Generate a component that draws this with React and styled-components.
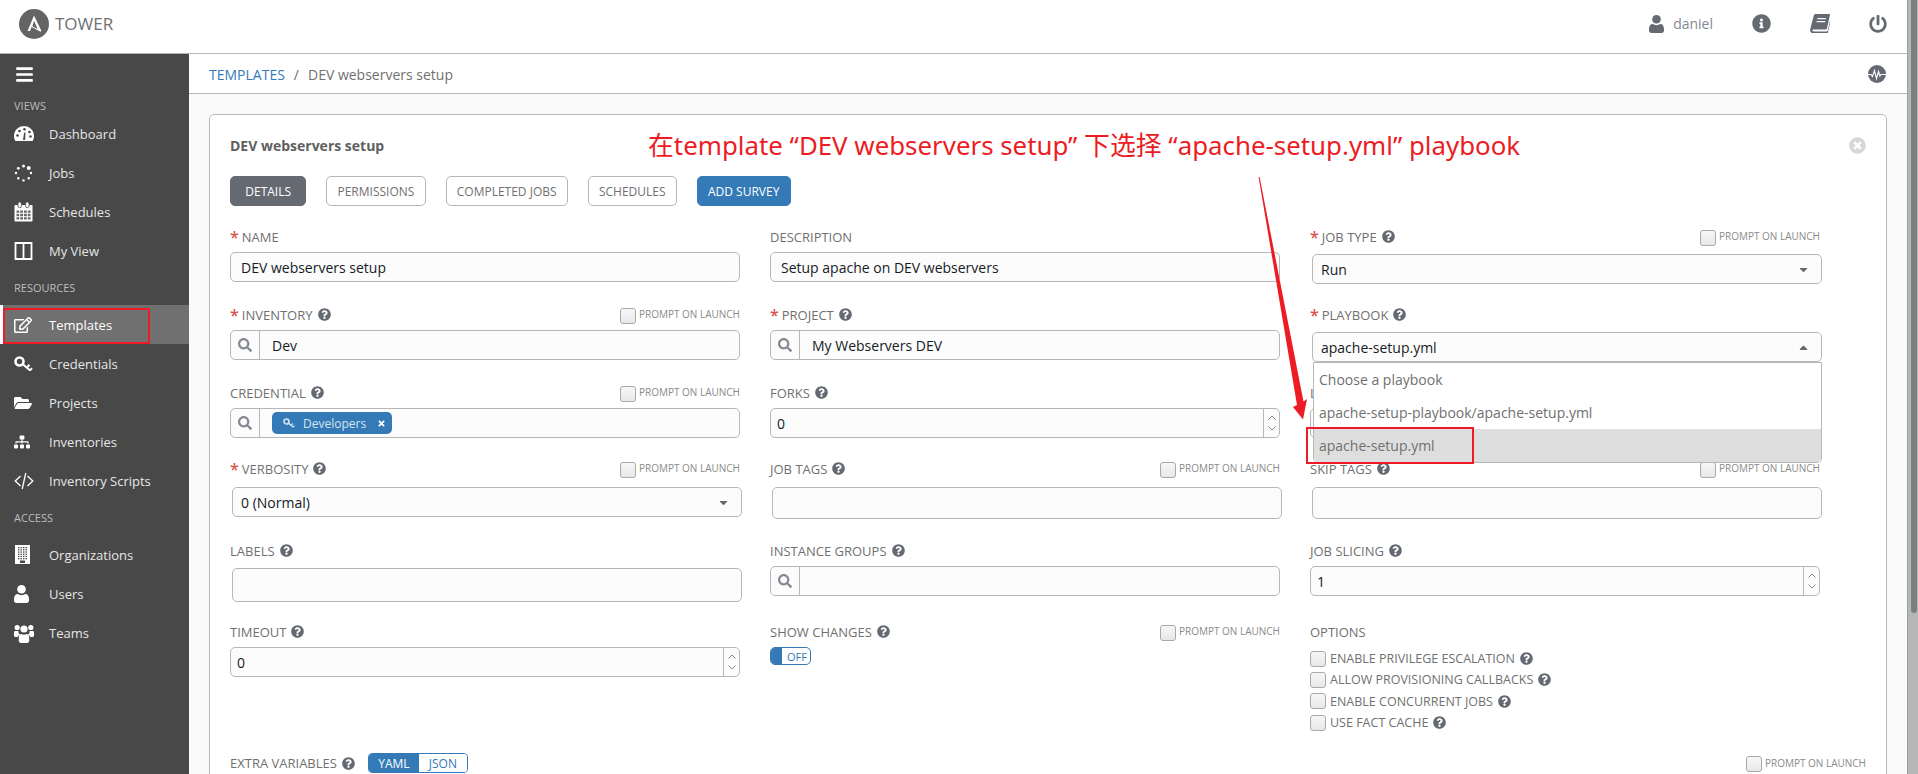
import React from "react";
import styled, { createGlobalStyle } from "styled-components";
import {
  FaBars,
  FaCaretDown,
  FaCaretUp,
  FaFolderOpen,
  FaInfoCircle,
  FaPowerOff,
  FaQuestionCircle,
  FaRegEdit,
  FaSearch,
  FaSitemap,
  FaTimes,
  FaTimesCircle,
} from "react-icons/fa";

const GlobalStyle = createGlobalStyle`
  html, body {
    margin: 0;
    height: 100%;
    overflow: hidden;
    background: #fff;
    font-family: "Open Sans", "Noto Sans", sans-serif;
  }
  * { box-sizing: border-box; }
`;

const Page = styled.div`
  position: relative;
  width: 1918px;
  height: 774px;
  overflow: hidden;
  display: flex;
  flex-direction: column;
`;

const Header = styled.header`
  height: 54px;
  flex: none;
  display: flex;
  align-items: center;
  padding: 0 20px 6px 19px;
  border-bottom: 1px solid #b7b7b7;
  margin-right: 11px;
  background: #fff;
`;

const Brand = styled.div`
  display: flex;
  align-items: center;
  gap: 6px;
  color: #707070;
  font-size: 17px;
  flex: 1;
`;

const UserName = styled.span`
  font-size: 14px;
  color: #848992;
  margin: 0 39px 0 9px;
`;

const HeadIcon = styled.span`
  display: flex;
  color: #646972;
  font-size: ${(p) => p.size || 18}px;
  margin-left: ${(p) => p.gap || 0}px;
`;

const Body = styled.div`
  flex: 1;
  display: flex;
  min-height: 0;
`;

const Sidebar = styled.nav`
  width: 189px;
  flex: none;
  background: #484848;
  color: #e6e6e6;
`;

const Burger = styled.div`
  height: 40px;
  padding-left: 15px;
  display: flex;
  align-items: center;
  color: #fff;
  font-size: 19px;
`;

const NavLabel = styled.div`
  height: ${(p) => (p.first ? 20 : 35)}px;
  padding: ${(p) => (p.first ? "2px" : "0")} 0 0 14px;
  display: flex;
  align-items: center;
  font-size: 11px;
  color: #bcbcbc;
`;

const NavItem = styled.div`
  height: 39px;
  display: flex;
  align-items: center;
  font-size: 13px;
  padding-left: ${(p) => (p.active ? 11 : 14)}px;
  border-left: ${(p) => (p.active ? "3px solid #fff" : "0")};
  background: ${(p) => (p.active ? "#707070" : "transparent")};
  color: ${(p) => (p.active ? "#fff" : "#e6e6e6")};
`;

const NavIcon = styled.span`
  width: 35px;
  display: flex;
  color: #fff;
  font-size: ${(p) => p.size || 18}px;
`;

const Main = styled.main`
  flex: 1;
  min-width: 0;
  display: flex;
  flex-direction: column;
`;

const Crumbs = styled.div`
  height: 40px;
  flex: none;
  display: flex;
  align-items: center;
  padding: 1px 21px 0 20px;
  margin-right: 11px;
  font-size: 14px;
  color: #707070;
  border-bottom: 1px solid #b7b7b7;
`;

const CrumbLink = styled.span`
  color: #337ab7;
`;

const Slash = styled.span`
  margin: 0 9px;
`;

const Pulse = styled.span`
  margin-left: auto;
  display: flex;
`;

const Content = styled.div`
  flex: 1;
  background: #fafafa;
  padding: 20px 31px 0 20px;
`;

const Card = styled.section`
  width: 1678px;
  height: 700px;
  background: #fff;
  border: 1px solid #b7b7b7;
  border-radius: 5px;
  padding: 20px;
`;

const TitleRow = styled.div`
  height: 22px;
  padding-bottom: 2px;
  display: flex;
  align-items: center;
  justify-content: space-between;
  font-size: 14px;
  font-weight: 700;
  color: #606060;
  margin-bottom: 19px;
`;

const CloseIcon = styled.span`
  display: flex;
  color: #d7d7d7;
  font-size: 17px;
`;

const Tabs = styled.div`
  display: flex;
  gap: 20px;
  margin-bottom: 24px;
`;

const Tab = styled.div`
  height: 30px;
  display: flex;
  align-items: center;
  padding: 0 ${(p) => (p.kind === "active" ? 14.25 : 10.2)}px;
  border-radius: 5px;
  font-size: 12px;
  border: 1px solid
    ${(p) =>
      p.kind === "active" ? "#646972" : p.kind === "primary" ? "#337ab7" : "#b7b7b7"};
  background: ${(p) =>
    p.kind === "active" ? "#646972" : p.kind === "primary" ? "#337ab7" : "#fff"};
  color: ${(p) => (p.kind ? "#fff" : "#707070")};
`;

const FormGrid = styled.div`
  display: grid;
  grid-template-columns: repeat(3, 510px);
  grid-template-rows: 78px 78px 76px 82px 81px 127px;
  column-gap: 30px;
`;

const Field = styled.div`
  min-width: 0;
  display: flex;
  flex-direction: column;
`;

const LabelRow = styled.div`
  height: 13px;
  flex: none;
  margin-bottom: 9px;
  display: flex;
  align-items: center;
  font-size: 13px;
  color: #707070;
  white-space: nowrap;
`;

const Star = styled.span`
  color: #d9534f;
  margin-right: 3px;
  font-size: 16px;
  font-weight: 600;
`;

const Help = styled.span`
  display: flex;
  color: #646972;
  font-size: 13px;
  margin-left: 5px;
`;

const Prompt = styled.span`
  margin: 2px 0 0 auto;
  display: flex;
  align-items: center;
  font-size: 10px;
  color: #8a8a8a;
`;

const PromptText = styled.span`
  margin: 0 0 3px 3px;
`;

const Check = styled.span`
  width: 16px;
  height: 16px;
  flex: none;
  border: 1px solid #a9a9a9;
  border-radius: 3px;
  background: linear-gradient(#f7f7f7, #e8e8e8);
`;

const Control = styled.div`
  position: relative;
  width: 510px;
  height: ${(p) => p.h || 30}px;
  flex: none;
  margin-left: ${(p) => (p.nudge ? 2 : 0)}px;
  margin-top: ${(p) => p.drop || 0}px;
  display: flex;
  align-items: center;
  background: #fcfcfc;
  border: 1px solid #b7b7b7;
  border-radius: 5px;
  font-size: 14px;
  color: #161b1f;
`;

const Value = styled.span`
  flex: 1;
  padding-left: ${(p) => p.pad || 10}px;
  white-space: nowrap;
`;

const SearchBox = styled.span`
  width: 29px;
  height: 100%;
  flex: none;
  display: flex;
  align-items: center;
  justify-content: center;
  border-right: 1px solid #b7b7b7;
  color: #848992;
  font-size: 14px;
`;

const Caret = styled.span`
  display: flex;
  color: #646972;
  font-size: 13px;
  margin-right: 11px;
`;

const Spinner = styled.span`
  width: 16px;
  height: 100%;
  flex: none;
  border-left: 1px solid #b7b7b7;
  display: flex;
  flex-direction: column;
  align-items: center;
  justify-content: center;
  gap: 6px;
`;

const TagPill = styled.span`
  height: 22px;
  margin-left: 12px;
  display: flex;
  align-items: center;
  padding: 0 6px 0 11px;
  background: #337ab7;
  border-radius: 5px;
  color: #d7e4f0;
  font-size: 12px;
`;

const TagKey = styled.span`
  display: flex;
  margin-right: 8px;
`;

const TagClose = styled.span`
  display: flex;
  color: #fff;
  font-size: 9px;
  margin-left: 11px;
`;

const Menu = styled.div`
  position: absolute;
  left: 0;
  right: -1px;
  top: 29px;
  height: 101px;
  z-index: 3;
  background: #fff;
  border: 1px solid #b7b7b7;
  border-radius: 0 0 5px 5px;
  color: #707070;
`;

const MenuItem = styled.div`
  height: 33px;
  padding-left: 5px;
  display: flex;
  align-items: center;
  background: ${(p) => (p.selected ? "#dedede" : "transparent")};
`;

const Toggle = styled.div`
  width: 41px;
  height: 18px;
  flex: none;
  display: flex;
  align-items: center;
  border: 1px solid #337ab7;
  border-radius: 5px;
  color: #337ab7;
  font-size: 11px;
  overflow: hidden;
`;

const ToggleKnob = styled.span`
  width: 11px;
  height: 100%;
  background: #337ab7;
  margin-right: 5px;
`;

const OptionRow = styled.div`
  height: 21.3px;
  display: flex;
  align-items: center;
  font-size: 12.5px;
  color: #707070;
`;

const OptionText = styled.span`
  margin-left: 4px;
`;

const OptionList = styled.div`
  margin-top: 1px;
`;

const ExtraRow = styled.div`
  display: flex;
  align-items: center;
  height: 22px;
  font-size: 13px;
  color: #707070;
`;

const Segment = styled.div`
  display: flex;
  height: 20px;
  margin-left: 13px;
  border: 1px solid #337ab7;
  border-radius: 4px;
  overflow: hidden;
  font-size: 12px;
`;

const SegmentItem = styled.span`
  width: ${(p) => (p.on ? 50 : 48)}px;
  display: flex;
  align-items: center;
  justify-content: center;
  background: ${(p) => (p.on ? "#337ab7" : "#fff")};
  color: ${(p) => (p.on ? "#fff" : "#337ab7")};
`;

const ScrollTrack = styled.div`
  position: absolute;
  top: 0;
  right: 0;
  width: 11px;
  height: 100%;
  padding-left: 3px;
  background: #b5b8b6;
  border-left: 1px solid #9c9f9d;
`;

const ScrollThumb = styled.div`
  width: 6px;
  height: 613px;
  border-radius: 0 0 3px 3px;
  background: #7b7f7f;
`;

const Note = styled.div`
  position: absolute;
  left: 648px;
  top: 126px;
  z-index: 5;
  font-family: "Noto Sans", "Noto Sans CJK SC", sans-serif;
  font-size: 25.85px;
  line-height: 38px;
  color: #ed1c24;
  white-space: nowrap;
`;

const RedBox = styled.div`
  position: absolute;
  z-index: 5;
  left: ${(p) => p.x}px;
  top: ${(p) => p.y}px;
  width: ${(p) => p.w}px;
  height: ${(p) => p.h}px;
  border: 2px solid #ed1c24;
`;

const ArrowSvg = styled.svg`
  position: absolute;
  left: 0;
  top: 0;
  z-index: 5;
  pointer-events: none;
`;

const Q = () => (
  <Help>
    <FaQuestionCircle />
  </Help>
);

const PromptCheck = () => (
  <Prompt>
    <Check />
    <PromptText>PROMPT ON LAUNCH</PromptText>
  </Prompt>
);

const Label = ({ text, req, help = true, prompt }) => (
  <LabelRow>
    {req && <Star>*</Star>}
    {text}
    {help && <Q />}
    {prompt && <PromptCheck />}
  </LabelRow>
);

const Chevrons = () => (
  <Spinner>
    <svg width="8" height="5" viewBox="0 0 8 5">
      <path d="M.5 4.5 4 1l3.5 3.5" fill="none" stroke="#848992" />
    </svg>
    <svg width="8" height="5" viewBox="0 0 8 5">
      <path d="M.5.5 4 4 7.5.5" fill="none" stroke="#848992" />
    </svg>
  </Spinner>
);

const TowerLogo = () => (
  <svg width="30" height="30" viewBox="0 0 30 30">
    <circle cx="15" cy="15" r="15" fill="#646464" />
    <path
      d="M15 6.5 8.5 22h2.6l1.5-3.9 8.6 4.3c.7.3 1.3-.3 1-1L15 6.5Zm0 5.3 3.7 8.2-5.2-2.6 1.5-5.6Z"
      fill="#fff"
    />
  </svg>
);

const GaugeIcon = () => (
  <svg width="20" height="15" viewBox="0 0 20 15">
    <path d="M10 0C4.5 0 0 4.4 0 10c0 1.800.5 3.500 1.300 5h17.400c.8-1.500 1.300-3.200 1.300-5 0-5.600-4.500-10-10-10Z" fill="#fff" />
    <g fill="#484848">
      <circle cx="3.500" cy="9.500" r="1.300" />
      <circle cx="5.500" cy="5" r="1.300" />
      <circle cx="10.500" cy="3.200" r="1.300" />
      <circle cx="15.500" cy="6" r="1.300" />
      <circle cx="16.500" cy="10.500" r="1.300" />
      <path d="M9 13.500 10.200 6.500h1.200L11.200 13.500a1.300 1.300 0 0 1-2.200 0Z" />
    </g>
  </svg>
);

const JobsIcon = () => (
  <svg width="19" height="18" viewBox="0 0 19 18" fill="#fff">
    <circle cx="9.500" cy="2" r="1.500" />
    <circle cx="14.700" cy="4" r="2" />
    <circle cx="17" cy="9" r="1.200" />
    <circle cx="14.700" cy="14.200" r="1.200" />
    <circle cx="9.500" cy="16.400" r="1.200" />
    <circle cx="4.300" cy="14.200" r="1.200" />
    <circle cx="2" cy="9" r="1.200" />
    <circle cx="4.300" cy="4.300" r="1.400" />
  </svg>
);

const CalendarIcon = () => (
  <svg width="19" height="20" viewBox="0 0 19 20">
    <path d="M1.500 3h16c.6 0 1 .4 1 1v14.500c0 .6-.4 1-1 1h-16c-.6 0-1-.4-1-1V4c0-.6.4-1 1-1Z" fill="#fff" />
    <path
      d="M2 8h15v10H2ZM5.700 8v10M9.500 8v10M13.300 8v10M2 11.300h15M2 14.700h15"
      fill="#6a6a6a"
      stroke="#fff"
      strokeWidth="1"
    />
    <rect x="4" y="0" width="3.400" height="5.600" rx="1.500" fill="#fff" stroke="#484848" strokeWidth=".8" />
    <rect x="11.600" y="0" width="3.400" height="5.600" rx="1.500" fill="#fff" stroke="#484848" strokeWidth=".8" />
  </svg>
);

const ColumnsIcon = () => (
  <svg width="19" height="18" viewBox="0 0 19 18">
    <path d="M1.500 1h16v16h-16ZM9.500 1v16" fill="none" stroke="#fff" strokeWidth="1.800" />
  </svg>
);

const KeyIcon = ({ w = 19, color = "#fff" }) => (
  <svg width={w} height={w * 0.84} viewBox="0 0 19 16">
    <g fill="none" stroke={color}>
      <circle cx="5.500" cy="5.500" r="4" strokeWidth="2.600" />
      <path d="M8.800 8.300 16.500 14.800M12.800 11.800l2.700-3M16 14.500l2-2.300" strokeWidth="2" />
    </g>
  </svg>
);

const CodeIcon = () => (
  <svg width="20" height="18" viewBox="0 0 20 18">
    <path d="M6.500 4 1.200 9l5.300 5M13.500 4l5.300 5-5.300 5M11.800 1 8.200 17" fill="none" stroke="#fff" strokeWidth="1.300" />
  </svg>
);

const BuildingIcon = () => {
  const windows = [];
  for (let row = 0; row < 6; row++) {
    for (let col = 0; col < 4; col++) {
      windows.push(<rect key={`${row}-${col}`} x={3 + col * 2.5} y={2 + row * 2.2} width="1.400" height="1.300" fill="#484848" />);
    }
  }
  return (
    <svg width="15" height="19" viewBox="0 0 15 19" style={{ marginLeft: 1 }}>
      <rect width="15" height="19" fill="#fff" />
      {windows}
      <rect x="5" y="15.500" width="5" height="2.500" fill="#484848" />
    </svg>
  );
};

const TeamIcon = () => (
  <svg width="20" height="20" viewBox="0 0 20 20" fill="#fff">
    <circle cx="3.200" cy="4.500" r="2.600" />
    <circle cx="16.800" cy="4.500" r="2.600" />
    <circle cx="10" cy="6" r="3.600" />
    <path d="M0 13V9.500C0 8.600.6 8 1.500 8h3c-.3 1.800.5 3 1.500 3.800-1.200.5-2 1.200-2.300 2.200C2 14 0 14 0 13ZM20 13V9.500c0-.9-.6-1.500-1.500-1.500h-3c.3 1.800-.5 3-1.500 3.800 1.200.5 2 1.200 2.300 2.200 1.700 0 3.700 0 3.700-1Z" />
    <path d="M4.800 14.500c0-2 1.200-3.500 2.500-3.500 1.500 1.100 3.900 1.100 5.400 0 1.300 0 2.500 1.500 2.500 3.500v3.300c0 1.300-1 2.200-2.200 2.200H7c-1.200 0-2.200-.9-2.200-2.200Z" />
  </svg>
);

const PersonIcon = ({ w = 14, color = "#fff" }) => (
  <svg width={w} height={w * 1.2} viewBox="0 0 15 18" fill={color}>
    <circle cx="7.500" cy="4.300" r="4.300" />
    <path d="M0 14c0-3 1.500-5 3.500-5 2.300 1.500 5.700 1.500 8 0 2 0 3.500 2 3.500 5v1.500c0 1.500-1 2.500-2.500 2.500h-10C1 18 0 17 0 15.500Z" />
  </svg>
);

const BookIcon = () => (
  <svg width="20" height="19" viewBox="0 0 20 19" fill="#646972">
    <path d="M6 0h13c.8 0 1 .6.9 1.200l-2.900 13c-.2.9-.8 1.300-1.600 1.300H3.600c-.8 0-1.200.6-1.100 1 .1.600.7.900 1.300.9h12.600c.7 0 1.200-.4 1.400-1l2.200-10 .5.600-2.500 11.200c-.2.900-1 1.800-2 1.800H3.200C1.500 19 0 17.600.1 16 .2 15 3.600 2 4 1.200 4.300.5 5 0 6 0Zm1.600 4-.3 1.200h8.400L16 4H7.600Zm-.8 3-.3 1.200h8.400l.3-1.200H6.800Z" />
  </svg>
);

const PulseIcon = () => (
  <svg width="18" height="18" viewBox="0 0 18 18">
    <circle cx="9" cy="9" r="9" fill="#646972" />
    <path
      d="M0 9.500h3l1.500 2 2-6 2 8 2-7 1.400 4.500 1-1.500H18"
      fill="none"
      stroke="#fff"
      strokeWidth="1.100"
    />
  </svg>
);

const views = [
  { name: "Dashboard", icon: <GaugeIcon /> },
  { name: "Jobs", icon: <JobsIcon /> },
  { name: "Schedules", icon: <CalendarIcon /> },
  { name: "My View", icon: <ColumnsIcon /> },
];

const resources = [
  { name: "Templates", icon: <FaRegEdit />, active: true },
  { name: "Credentials", icon: <KeyIcon /> },
  { name: "Projects", icon: <FaFolderOpen /> },
  { name: "Inventories", icon: <FaSitemap />, size: 16 },
  { name: "Inventory Scripts", icon: <CodeIcon /> },
];

const access = [
  { name: "Organizations", icon: <BuildingIcon /> },
  { name: "Users", icon: <PersonIcon w={15} /> },
  { name: "Teams", icon: <TeamIcon /> },
];

const NavGroup = ({ items }) =>
  items.map((item) => (
    <NavItem key={item.name} active={item.active}>
      <NavIcon size={item.size}>{item.icon}</NavIcon>
      {item.name}
    </NavItem>
  ));

const options = [
  "ENABLE PRIVILEGE ESCALATION",
  "ALLOW PROVISIONING CALLBACKS",
  "ENABLE CONCURRENT JOBS",
  "USE FACT CACHE",
];

export default function App() {
  return (
    <Page>
      <GlobalStyle />
      <Header>
        <Brand>
          <TowerLogo />
          TOWER
        </Brand>
        <HeadIcon>
          <PersonIcon w={15} color="#646972" />
        </HeadIcon>
        <UserName>daniel</UserName>
        <HeadIcon size={19}>
          <FaInfoCircle />
        </HeadIcon>
        <HeadIcon gap={39}>
          <BookIcon />
        </HeadIcon>
        <HeadIcon gap={39} size={18}>
          <FaPowerOff />
        </HeadIcon>
      </Header>
      <Body>
        <Sidebar>
          <Burger>
            <FaBars />
          </Burger>
          <NavLabel first>VIEWS</NavLabel>
          <NavGroup items={views} />
          <NavLabel>RESOURCES</NavLabel>
          <NavGroup items={resources} />
          <NavLabel>ACCESS</NavLabel>
          <NavGroup items={access} />
        </Sidebar>
        <Main>
          <Crumbs>
            <CrumbLink>TEMPLATES</CrumbLink>
            <Slash>/</Slash>
            DEV webservers setup
            <Pulse>
              <PulseIcon />
            </Pulse>
          </Crumbs>
          <Content>
            <Card>
              <TitleRow>
                DEV webservers setup
                <CloseIcon>
                  <FaTimesCircle />
                </CloseIcon>
              </TitleRow>
              <Tabs>
                <Tab kind="active">DETAILS</Tab>
                <Tab>PERMISSIONS</Tab>
                <Tab>COMPLETED JOBS</Tab>
                <Tab>SCHEDULES</Tab>
                <Tab kind="primary">ADD SURVEY</Tab>
              </Tabs>
              <FormGrid>
                <Field>
                  <Label text="NAME" req help={false} />
                  <Control>
                    <Value>DEV webservers setup</Value>
                  </Control>
                </Field>
                <Field>
                  <Label text="DESCRIPTION" help={false} />
                  <Control>
                    <Value>Setup apache on DEV webservers</Value>
                  </Control>
                </Field>
                <Field>
                  <Label text="JOB TYPE" req prompt />
                  <Control nudge drop={2}>
                    <Value pad={8}>Run</Value>
                    <Caret>
                      <FaCaretDown />
                    </Caret>
                  </Control>
                </Field>

                <Field>
                  <Label text="INVENTORY" req prompt />
                  <Control>
                    <SearchBox>
                      <FaSearch />
                    </SearchBox>
                    <Value pad={12}>Dev</Value>
                  </Control>
                </Field>
                <Field>
                  <Label text="PROJECT" req />
                  <Control>
                    <SearchBox>
                      <FaSearch />
                    </SearchBox>
                    <Value pad={12}>My Webservers DEV</Value>
                  </Control>
                </Field>
                <Field>
                  <Label text="PLAYBOOK" req />
                  <Control nudge drop={2}>
                    <Value pad={8}>apache-setup.yml</Value>
                    <Caret>
                      <FaCaretUp />
                    </Caret>
                    <Menu>
                      <MenuItem>Choose a playbook</MenuItem>
                      <MenuItem>apache-setup-playbook/apache-setup.yml</MenuItem>
                      <MenuItem selected>apache-setup.yml</MenuItem>
                    </Menu>
                  </Control>
                </Field>

                <Field>
                  <Label text="CREDENTIAL" prompt />
                  <Control>
                    <SearchBox>
                      <FaSearch />
                    </SearchBox>
                    <TagPill>
                      <TagKey>
                        <KeyIcon w={12} color="#d7e4f0" />
                      </TagKey>
                      Developers
                      <TagClose>
                        <FaTimes />
                      </TagClose>
                    </TagPill>
                  </Control>
                </Field>
                <Field>
                  <Label text="FORKS" />
                  <Control>
                    <Value pad={6}>0</Value>
                    <Chevrons />
                  </Control>
                </Field>
                <Field>
                  <Label text="LIMIT" />
                  <Control />
                </Field>

                <Field>
                  <Label text="VERBOSITY" req prompt />
                  <Control nudge drop={3}>
                    <Value pad={8}>0 (Normal)</Value>
                    <Caret>
                      <FaCaretDown />
                    </Caret>
                  </Control>
                </Field>
                <Field>
                  <Label text="JOB TAGS" prompt />
                  <Control nudge drop={3} h={32} />
                </Field>
                <Field>
                  <Label text="SKIP TAGS" prompt />
                  <Control nudge drop={3} h={32} />
                </Field>

                <Field>
                  <Label text="LABELS" />
                  <Control nudge h={34} drop={2} />
                </Field>
                <Field>
                  <Label text="INSTANCE GROUPS" />
                  <Control>
                    <SearchBox>
                      <FaSearch />
                    </SearchBox>
                  </Control>
                </Field>
                <Field>
                  <Label text="JOB SLICING" />
                  <Control>
                    <Value pad={6}>1</Value>
                    <Chevrons />
                  </Control>
                </Field>

                <Field>
                  <Label text="TIMEOUT" />
                  <Control>
                    <Value pad={6}>0</Value>
                    <Chevrons />
                  </Control>
                </Field>
                <Field>
                  <Label text="SHOW CHANGES" prompt />
                  <Toggle>
                    <ToggleKnob />
                    OFF
                  </Toggle>
                </Field>
                <Field>
                  <Label text="OPTIONS" help={false} />
                  <OptionList>
                    {options.map((opt) => (
                      <OptionRow key={opt}>
                        <Check />
                        <OptionText>{opt}</OptionText>
                        <Q />
                      </OptionRow>
                    ))}
                  </OptionList>
                </Field>
              </FormGrid>
              <ExtraRow>
                EXTRA VARIABLES
                <Q />
                <Segment>
                  <SegmentItem on>YAML</SegmentItem>
                  <SegmentItem>JSON</SegmentItem>
                </Segment>
                <PromptCheck />
              </ExtraRow>
            </Card>
          </Content>
        </Main>
      </Body>
      <ScrollTrack>
        <ScrollThumb />
      </ScrollTrack>
      <Note>在template “DEV webservers setup” 下选择 “apache-setup.yml” playbook</Note>
      <RedBox x={3} y={308} w={147} h={36} />
      <RedBox x={1306} y={427} w={168} h={37} />
      <ArrowSvg width="1918" height="774">
        <path
          d="M1258.600 177 1259.600 177 1303.500 401.500 1307 399 1303 419.500 1293 407 1297 405Z"
          fill="#ed1c24"
        />
      </ArrowSvg>
    </Page>
  );
}
